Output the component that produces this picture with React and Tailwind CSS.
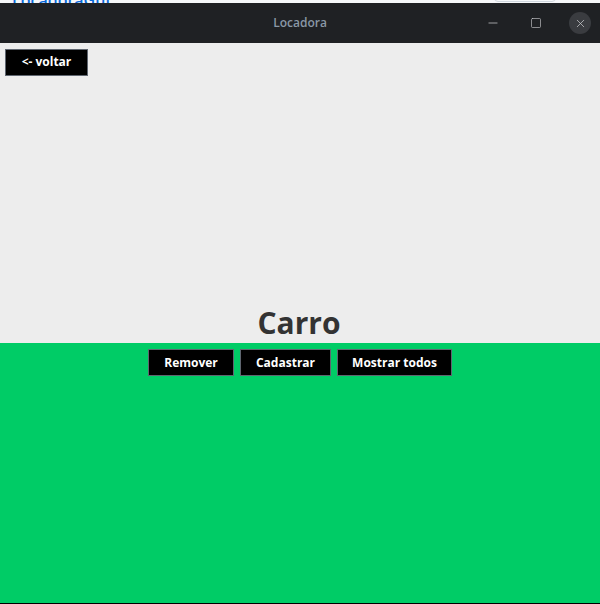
import { Minus, Square, X } from "lucide-react";

const font = { fontFamily: '"Open Sans", "Noto Sans", sans-serif' };

const Btn = ({ children, className = "" }) => (
  <button
    className={`h-[26px] bg-black border border-[#5f6670] text-white text-[12px] font-bold leading-none ${className}`}
  >
    {children}
  </button>
);

export default function App() {
  return (
    <div className="w-[600px] h-[604px] flex flex-col bg-black overflow-hidden" style={font}>
      {/* page behind the window, mostly cut off */}
      <div className="h-[3px] bg-[#f6f8fa] overflow-hidden relative shrink-0">
        <span className="absolute left-[12px] -top-[12px] text-[16px] font-semibold text-[#0969da]">
          LocadoraGui
        </span>
        <span className="absolute left-[494px] -top-[10px] h-[12px] w-[62px] border border-[#d0d7de] rounded" />
      </div>

      {/* title bar */}
      <div className="h-[40px] shrink-0 bg-[#1f2124] flex items-center relative">
        <span className="mx-auto text-[12px] font-semibold text-[#8a98a6]">Locadora</span>
        <div className="absolute right-[9px] top-0 h-full flex items-center text-[#c6c8ca]">
          <Minus size={14} strokeWidth={1.3} />
          <Square size={12} strokeWidth={1.3} className="ml-[30px]" />
          <span className="ml-[27px] w-[22px] h-[22px] rounded-full bg-[#3a3c40] flex items-center justify-center">
            <X size={13} strokeWidth={1.4} />
          </span>
        </div>
      </div>

      {/* light section */}
      <div className="h-[300px] shrink-0 bg-[#ededed] flex flex-col">
        <div className="pt-[5px] pl-[5px]">
          <Btn className="w-[83px] h-[27px]">&lt;- voltar</Btn>
        </div>
        <h1 className="mt-auto text-center text-[30px] font-bold text-[#333333] leading-none pb-[5px] pr-[2px]">
          Carro
        </h1>
      </div>

      {/* green section */}
      <div className="h-[260px] shrink-0 bg-[#00cc66] flex justify-center gap-[6px] pt-[6px]">
        <Btn className="w-[86px] h-[27px]">Remover</Btn>
        <Btn className="w-[91px] h-[27px]">Cadastrar</Btn>
        <Btn className="w-[115px] h-[27px]">Mostrar todos</Btn>
      </div>
    </div>
  );
}
